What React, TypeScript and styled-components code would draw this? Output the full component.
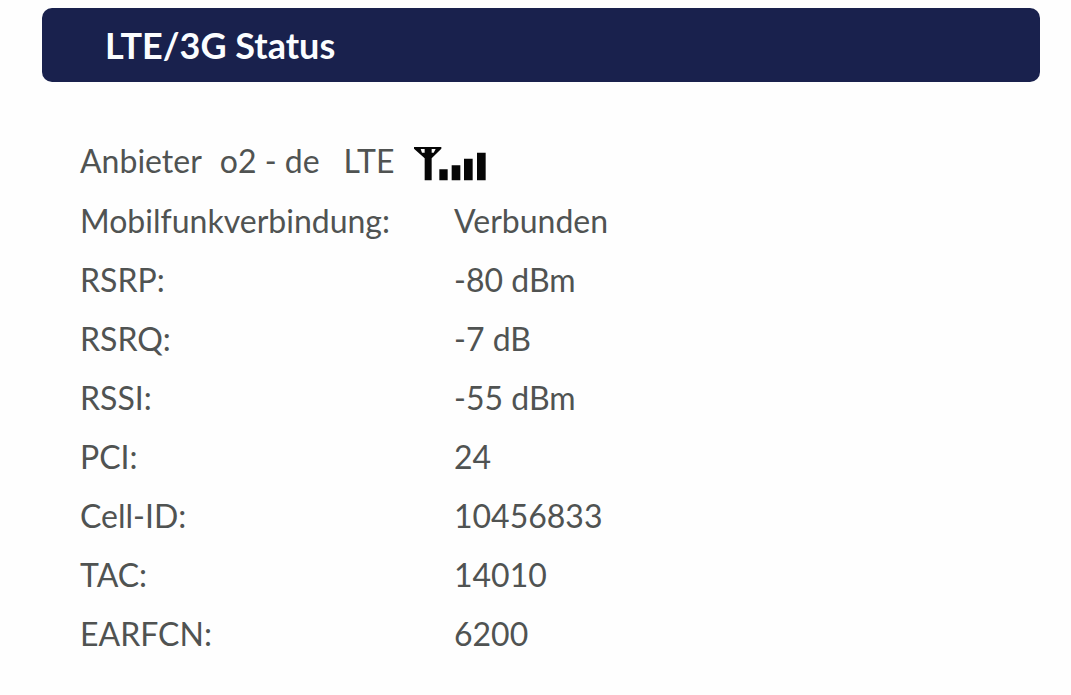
import React from "react";
import styled, { createGlobalStyle } from "styled-components";

const GlobalStyle = createGlobalStyle`
  * { box-sizing: border-box; }
  body {
    margin: 0;
    background: #fefefe;
    color: #505352;
    font-family: Lato, "Noto Sans", sans-serif;
    font-size: 32px;
    line-height: 58px;
  }
`;

const Page = styled.main`
  padding: 8px 31px 8px 42px;
`;

const Banner = styled.header`
  display: flex;
  align-items: center;
  min-height: 74px;
  padding: 0 63px;
  border-radius: 10px;
  background: #19214d;
`;

const Title = styled.h1`
  margin: 0;
  color: #fbfdff;
  font-size: 36px;
  font-weight: 700;
  line-height: 48px;
`;

const Details = styled.section`
  padding: 50px 38px 0;
`;

const Provider = styled.div`
  display: flex;
  align-items: center;
`;

const Operator = styled.span`
  margin: 0 24px 0 18px;
`;

const Signal = styled.svg`
  width: 72px;
  height: 34px;
  margin: 6px 0 0 20px;
`;

const Values = styled.table`
  width: 100%;
  margin-top: 1px;
  border-collapse: collapse;
  table-layout: fixed;
`;

const Label = styled.th`
  width: 374px;
  height: 59px;
  padding: 0;
  font-weight: 400;
  text-align: left;
`;

const Value = styled.td`
  padding: 0;
`;

const rows = [
  ["Mobilfunkverbindung:", "Verbunden"],
  ["RSRP:", "-80 dBm"],
  ["RSRQ:", "-7 dB"],
  ["RSSI:", "-55 dBm"],
  ["PCI:", "24"],
  ["Cell-ID:", "10456833"],
  ["TAC:", "14010"],
  ["EARFCN:", "6200"],
];

function SignalIcon() {
  return (
    <Signal viewBox="42 36 216 102" role="img" aria-label="Signal">
      <path
        fill="#060606"
        fillRule="evenodd"
        d="M42 36H124V41L95 70V136H74V70L42 41ZM62 42L66 53H74V42ZM95 42V53H101L107 42Z"
      />
      <path fill="#060606" d="M118 103h25v33h-25zM155 91h26v45h-26zM192 71h26v65h-26zM231 53h26v83h-26z" />
    </Signal>
  );
}

export default function App() {
  return (
    <>
      <GlobalStyle />
      <Page>
        <Banner>
          <Title>LTE/3G Status</Title>
        </Banner>
        <Details>
          <Provider>
            <span>Anbieter</span>
            <Operator>o2 - de</Operator>
            <span>LTE</span>
            <SignalIcon />
          </Provider>
          <Values>
            <tbody>
              {rows.map(([label, value]) => (
                <tr key={label}>
                  <Label scope="row">{label}</Label>
                  <Value>{value}</Value>
                </tr>
              ))}
            </tbody>
          </Values>
        </Details>
      </Page>
    </>
  );
}
